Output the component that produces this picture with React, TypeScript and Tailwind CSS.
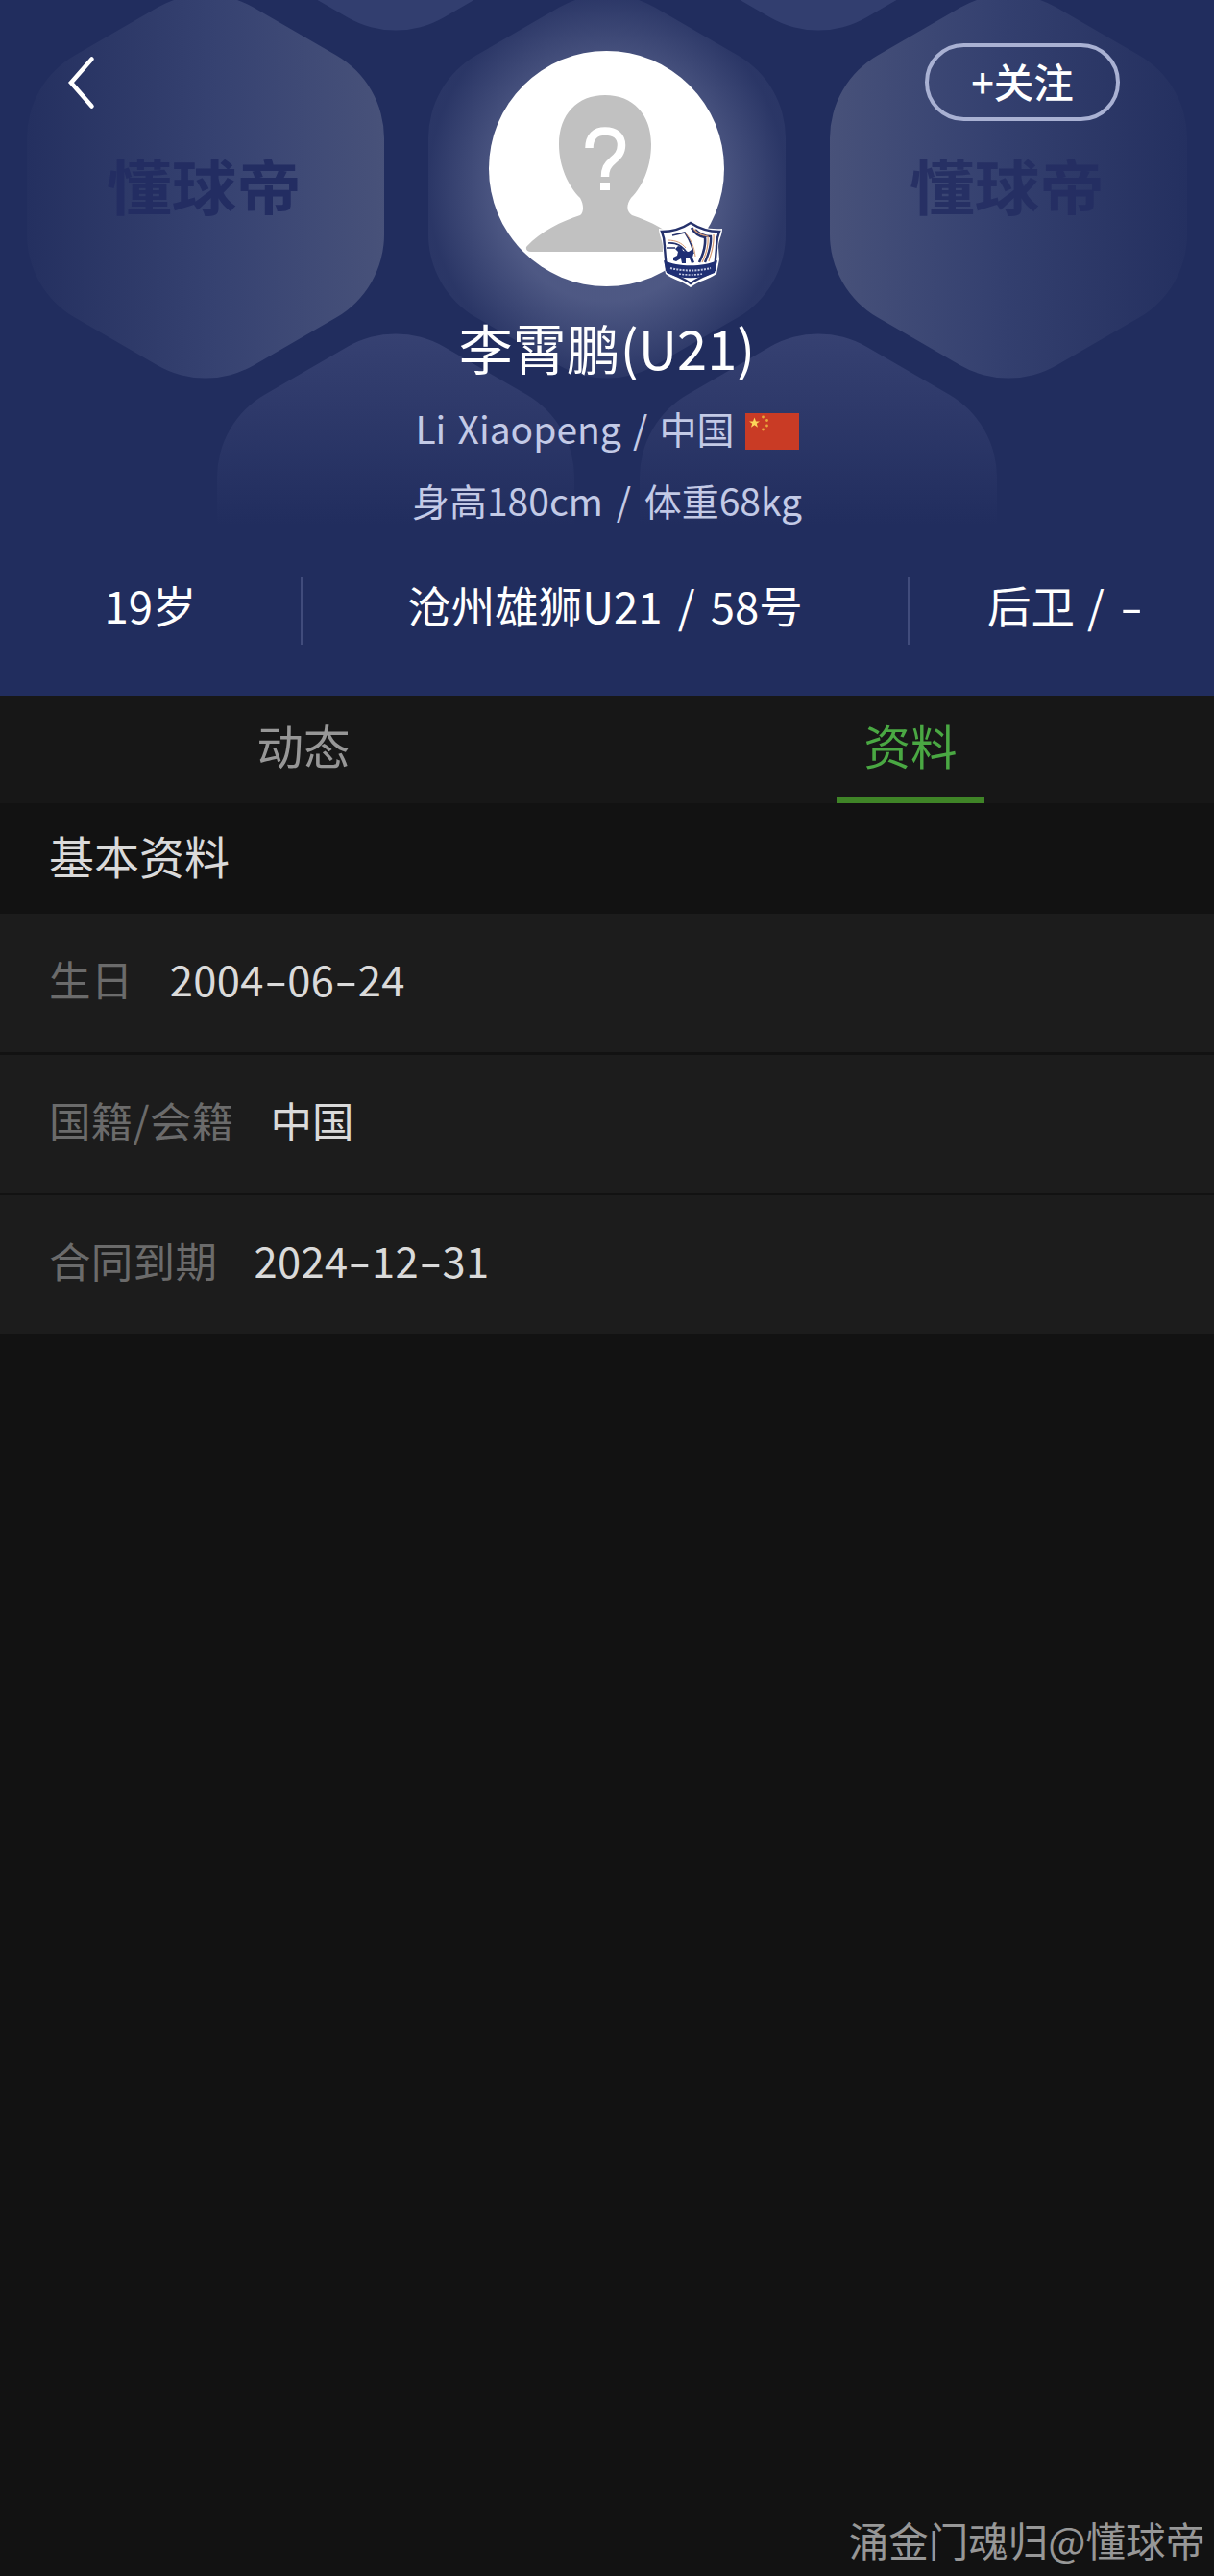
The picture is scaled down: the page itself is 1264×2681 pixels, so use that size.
import React from 'react';

const hexPath = 'M-50 -186.2 A100 100 0 0 1 50 -186.2 L136 -136.5 A100 100 0 0 1 186 -50 L186 50 A100 100 0 0 1 136 136.5 L50 186.2 A100 100 0 0 1 -50 186.2 L-136 136.5 A100 100 0 0 1 -186 50 L-186 -50 A100 100 0 0 1 -136 -136.5 Z';

const Backdrop: React.FC = () => (
  <svg className="absolute inset-0" width="1264" height="724" viewBox="0 0 1264 724" fill="none">
    <defs>
      <linearGradient id="toRight">
        <stop offset="0" stopColor="#8a90a8" stopOpacity="0.03" />
        <stop offset="0.5" stopColor="#8490b8" stopOpacity="0.2" />
        <stop offset="1" stopColor="#8a90a8" stopOpacity="0.37" />
      </linearGradient>
      <linearGradient id="toLeft">
        <stop offset="0" stopColor="#8a90a8" stopOpacity="0.37" />
        <stop offset="0.5" stopColor="#8490b8" stopOpacity="0.18" />
        <stop offset="1" stopColor="#8a90a8" stopOpacity="0.03" />
      </linearGradient>
      <linearGradient id="fadeDown" x1="0.5" y1="0" x2="0.5" y2="0.5">
        <stop offset="0" stopColor="#8a90c0" stopOpacity="0.2" />
        <stop offset="1" stopColor="#8a90c0" stopOpacity="0" />
      </linearGradient>
      <radialGradient id="glow">
        <stop offset="0.6" stopColor="#8c94b8" stopOpacity="0.42" />
        <stop offset="1" stopColor="#8c94b8" stopOpacity="0.09" />
      </radialGradient>
    </defs>
    <path d={hexPath} transform="translate(412 -168)" fill="#323e6f" />
    <path d={hexPath} transform="translate(852 -168)" fill="#323e6f" />
    <path d={hexPath} transform="translate(214 194)" fill="url(#toRight)" />
    <path d={hexPath} transform="translate(632 194)" fill="url(#glow)" />
    <path d={hexPath} transform="translate(1050 194)" fill="url(#toLeft)" />
    <path d={hexPath} transform="translate(412 547)" fill="url(#fadeDown)" />
    <path d={hexPath} transform="translate(852 547)" fill="url(#fadeDown)" />
    <g fill="#232d62" fontFamily="'Noto Sans CJK SC', sans-serif" fontWeight="700" fontSize="62">
      <text x="111" y="219" textLength="203" lengthAdjust="spacingAndGlyphs">懂球帝</text>
      <text x="947" y="219" textLength="203" lengthAdjust="spacingAndGlyphs" fillOpacity="0.85">懂球帝</text>
    </g>
  </svg>
);

const Crest: React.FC = () => (
  <svg className="absolute left-[177px] top-[177px]" width="67" height="69" viewBox="0 0 67 69" fill="none">
    <path d="M33 0 C40 6 53 9 66 8 C66 15 62 20 62 27 L63 40 L60 55 C52 61 42 62 33 69 C24 62 14 61 7 55 L4 40 L4 27 C4 20 0 15 0 8 C13 9 26 6 33 0Z" fill="#fff" />
    <path d="M33 2 C42 8 52 11 63 11 C60 18 60 22 60 28 L58 51 C50 57 41 59 33 65 C25 59 16 57 8 51 L6 28 C6 22 6 18 3 11 C14 11 24 8 33 2Z" stroke="#26326c" strokeWidth="2.4" />
    <path d="M9 23 C20 22 27 27 32 38 M14 15 L27 12 C31 18 35 26 36 34" stroke="#26326c" strokeWidth="1.6" />
    <path d="M9 20 C18 20 24 23 28 28 M27 12 C33 18 37 27 38 37" stroke="#d79a72" strokeWidth="1" />
    <path d="M34 7 C38 14 42 16 48 17 C49 27 46 35 42 43" stroke="#26326c" strokeWidth="2.6" />
    <path d="M38 9 C43 14 48 16 54 16 C55 27 51 36 48 43" stroke="#26326c" strokeWidth="2.4" />
    <path d="M36 8 C41 14 46 15 51 16 C52 27 49 35 45 43 M57 14 C58 26 54 35 52 42" stroke="#d79a72" strokeWidth="1.2" />
    <path d="M17 29 L20 26 L24 27 L25 31 L31 32 L34 30 L36 34 L35 38 L37 43 L34 44 L32 39 L28 39 L28 44 L24 44 L23 39 L18 42 L15 41 L15 38 L19 36 L20 32Z" fill="#1f2f74" />
    <path d="M8 28 H17" stroke="#26326c" strokeWidth="1.5" />
    <path d="M5 41 C20 48 46 48 61 41 L58 54 C44 61 22 61 8 54Z" fill="#1f2f74" />
    <path d="M12 49 Q33 54 54 49" stroke="#c3c9e2" strokeWidth="2" strokeDasharray="2 1.2" />
    <path d="M21 55 Q33 57 45 55" stroke="#c3c9e2" strokeWidth="1.6" strokeDasharray="2 1.2" />
  </svg>
);

const Avatar: React.FC = () => (
  <div className="relative mt-[53px] h-[245px] w-[245px]">
    <svg width="245" height="245" viewBox="0 0 245 245" fill="none">
      <circle cx="122.5" cy="122.5" r="122.5" fill="#fff" />
      <path d="M121 46 C92 46 73 66 73 97 C73 121 83 141 95 153 C99 160 99 168 95 171 C76 177 52 189 39 204 Q38 209 44 209 H202 Q208 209 204 204 C191 189 168 177 149 171 C143 167 143 160 148 153 C160 141 169 121 169 97 C169 66 150 46 121 46Z" fill="#c1c1c1" />
      <path d="M104.500 101 C104.500 89 111 83.500 121 83.500 C132 83.500 138 89 138 98 C138 106 134 110 129 114 C123 119 121 123 121 131" stroke="#fff" strokeWidth="8.500" />
      <rect x="116" y="137" width="10" height="8" fill="#fff" />
    </svg>
    <Crest />
  </div>
);

const Flag: React.FC = () => (
  <svg width="56" height="38" viewBox="0 0 56 38">
    <rect width="56" height="38" fill="#c93b25" />
    <path d="M9.5 4.500 L11 8.400 H15 L11.800 10.800 L13 14.700 L9.500 12.300 L6 14.700 L7.200 10.800 L4 8.400 H8Z" fill="#fbd65a" />
    <g fill="#e9a63c">
      <circle cx="18.5" cy="4" r="1.4" />
      <circle cx="22.5" cy="7.5" r="1.4" />
      <circle cx="22.5" cy="13" r="1.4" />
      <circle cx="18.5" cy="17" r="1.4" />
    </g>
  </svg>
);

const Row: React.FC<{ label: string; children: React.ReactNode }> = ({ label, children }) => (
  <div className="flex h-[144px] items-center gap-[38px] bg-[#1c1c1c] pb-[8px] pl-[51px] text-[43.5px]">
    <span className="tracking-[0.3px] text-[#6b6b6b]">{label}</span>
    <span className="text-[#dadada]">{children}</span>
  </div>
);

// dates are set with a wide dash
const DateText: React.FC<{ value: string }> = ({ value }) => (
  <>
    {value.split('').map((c, i) => (
      <span key={i} className={c === '-' ? 'inline-block w-[24.5px] scale-x-[1.6] text-center' : 'inline-block w-[24.5px] text-center'}>{c}</span>
    ))}
  </>
);

export default function App() {
  return (
    <div className="flex h-[2681px] w-[1264px] flex-col bg-[#121212] font-['Noto_Sans_CJK_SC',sans-serif] leading-none">
      <header className="relative h-[724px] bg-[#212d5e] text-white">
        <Backdrop />
        <div className="relative flex h-full flex-col">
          <div className="grid h-[298px] grid-cols-3 justify-items-center">
            <button className="mt-[58px] ml-[70px] h-[56px] w-[30px] justify-self-start">
              <svg width="30" height="56" viewBox="0 0 30 56" fill="none">
                <path d="M25.5 3.5 L4 28 L25.5 52.5" stroke="#fff" strokeWidth="4.5" strokeLinecap="round" />
              </svg>
            </button>
            <Avatar />
            <button className="mt-[45px] mr-[98px] flex h-[81px] w-[203px] items-center justify-center justify-self-end rounded-full border-4 border-[#a9b1d3] pb-[2px] text-[41.5px] font-medium">
              +关注
            </button>
          </div>
          <h1 className="mt-[35px] text-center text-[56px] leading-[56px]">李霄鹏(U21)</h1>
          <div className="mt-[41px] flex h-[38px] items-center justify-center gap-[11px] text-[39px] text-[#c3cae6]">
            <span className="pb-[7px] [word-spacing:3.5px]">Li Xiaopeng / 中国</span>
            <Flag />
          </div>
          <p className="mt-[33px] text-center text-[39px] text-[#c3cae6] [word-spacing:5px]">身高180cm / 体重68kg</p>
          <div className="mt-[61px] grid h-[70px] grid-cols-[313px_1fr_317px] items-center text-center text-[45.5px]">
            <span className="pb-[12px]">19岁</span>
            <span className="flex h-[70px] items-center justify-center border-x-2 border-[#414c7c] pb-[12px] [word-spacing:6px]">沧州雄狮U21 / 58号</span>
            <span className="pb-[12px] [word-spacing:3px]">后卫 / <span className="inline-block w-[20px] origin-left scale-x-[1.5]">-</span></span>
          </div>
        </div>
      </header>
      <nav className="grid h-[112px] grid-cols-2 bg-[#171717] text-[48.5px]">
        <div className="flex items-center justify-center pb-[9px] text-[#979797]">动态</div>
        <div className="flex flex-col items-center justify-between pt-[27px] text-[#4aa843]">
          资料
          <span className="h-[7px] w-[154px] bg-[#3f8427]" />
        </div>
      </nav>
      <h2 className="flex h-[115px] items-center pb-[8px] pl-[51px] text-[47px] text-[#dadada]">基本资料</h2>
      <div className="flex flex-col gap-[2.5px]">
        <Row label="生日"><DateText value="2004-06-24" /></Row>
        <Row label="国籍/会籍">中国</Row>
        <Row label="合同到期"><DateText value="2024-12-31" /></Row>
      </div>
      <footer className="mt-auto pr-[9px] pb-[17px] text-right text-[41.5px] text-[#979797]">涌金门魂归@懂球帝</footer>
    </div>
  );
}
